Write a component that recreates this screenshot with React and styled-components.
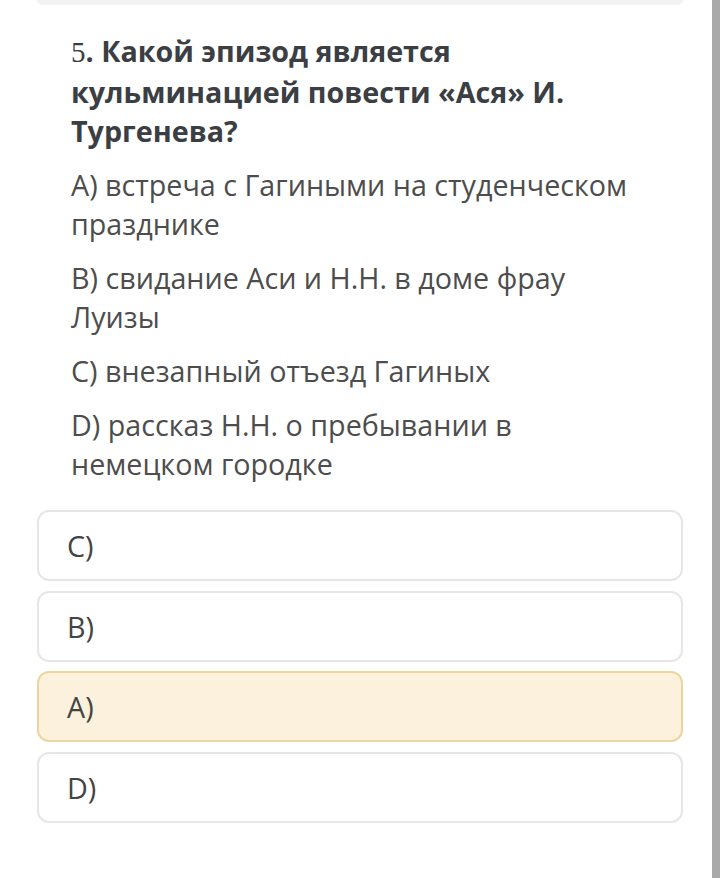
import React from "react";
import styled, { createGlobalStyle } from "styled-components";

const GlobalStyle = createGlobalStyle`
  html, body {
    margin: 0;
    padding: 0;
    background: #ffffff;
  }
  body {
    font-family: "Open Sans", "Noto Sans", sans-serif;
  }
`;

const options = [
  "A) встреча с Гагиными на студенческом празднике",
  "B) свидание Аси и Н.Н. в доме фрау Луизы",
  "C) внезапный отъезд Гагиных",
  "D) рассказ Н.Н. о пребывании в немецком городке",
];

const answers = [
  { label: "C)", picked: false },
  { label: "B)", picked: false },
  { label: "A)", picked: true },
  { label: "D)", picked: false },
];

const App = () => {
  return (
    <>
      <GlobalStyle />
      <Screen>
        <Content>
          <PrevCard />
          <Question>
            <Title>
              <Num>5</Num>. Какой эпизод является кульминацией повести «Ася» И.
              Тургенева?
            </Title>
            {options.map((o) => (
              <Option key={o}>{o}</Option>
            ))}
          </Question>
          <Answers>
            {answers.map((a) => (
              <Answer key={a.label} $picked={a.picked}>
                {a.label}
              </Answer>
            ))}
          </Answers>
        </Content>
        <Scrollbar />
      </Screen>
    </>
  );
};

export default App;

const Screen = styled.div`
  display: flex;
  width: 720px;
  height: 878px;
  overflow: hidden;
`;

const Content = styled.div`
  flex: 1;
  display: flex;
  flex-direction: column;
  padding: 0 29px 0 37px;
`;

const Scrollbar = styled.div`
  width: 8px;
  background: #a9a9a9;
`;

const PrevCard = styled.div`
  height: 5px;
  background: #f3f3f3;
  border-radius: 0 0 12px 12px;
`;

const Question = styled.div`
  display: flex;
  flex-direction: column;
  gap: 15px;
  padding: 26px 40px 0 34px;
  color: #4a4a4a;
`;

const Title = styled.div`
  font-size: 28.7px;
  line-height: 39px;
  font-weight: 700;
  color: #3b3f44;
`;

const Num = styled.span`
  display: inline-block;
  font-family: "Liberation Serif", "DejaVu Serif", serif;
  font-weight: 400;
  font-size: 29px;
`;

const Option = styled.div`
  font-size: 28.7px;
  line-height: 39px;
  font-weight: 400;
  color: #4d4d4d;
`;

const Answers = styled.div`
  display: flex;
  flex-direction: column;
  gap: 9.5px;
  margin-top: 27px;
`;

const Answer = styled.div`
  height: 71px;
  box-sizing: border-box;
  display: flex;
  align-items: center;
  padding-left: 28px;
  border-radius: 12px;
  border: 2px solid ${(p) => (p.$picked ? "#ecd69f" : "#e6e6e6")};
  background: ${(p) => (p.$picked ? "#fbf1dd" : "#ffffff")};
  font-size: 28.7px;
  color: #444444;
`;
